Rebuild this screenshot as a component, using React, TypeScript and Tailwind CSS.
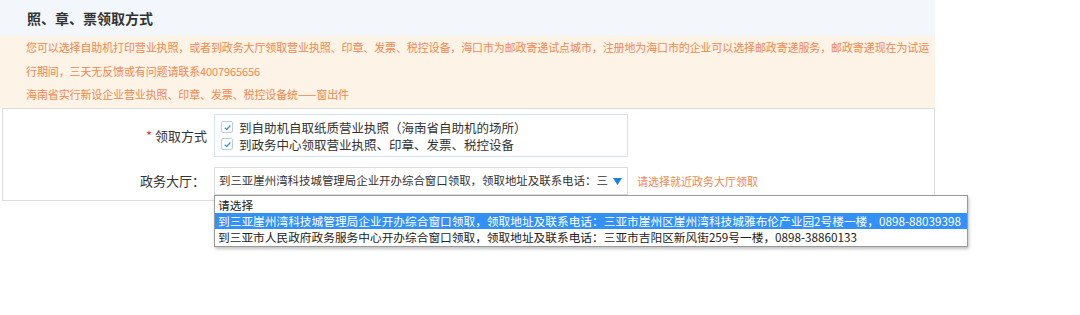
import React from "react";

const font = { fontFamily: '"Microsoft YaHei", "Noto Sans CJK SC", "Noto Sans", sans-serif' };

function Check() {
  return (
    <span className="flex h-[12px] w-[12px] shrink-0 items-center justify-center rounded-[2px] border border-[#b8cfe6] bg-white">
      <svg width="9" height="9" viewBox="0 0 10 10">
        <path d="M2 5.2 L4.2 7.2 L8.2 2.8" fill="none" stroke="#3a8ee6" strokeWidth="1.4" />
      </svg>
    </span>
  );
}

export default function App() {
  return (
    <div className="relative h-[315px] w-[1080px] bg-white text-[#333]" style={font}>
      <div className="w-[935px]">
        <div className="flex h-[36px] items-center bg-[#f3f7fc] pl-[27px] text-[14px] font-bold text-[#333]">
          照、章、票领取方式
        </div>
        <div className="h-[72px] bg-[#fdf3e7] pl-[26px] text-[11px] leading-[23.7px] tracking-[-0.12px] text-[#f0884f]">
          <p className="whitespace-nowrap">
            您可以选择自助机打印营业执照，或者到政务大厅领取营业执照、印章、发票、税控设备，海口市为邮政寄递试点城市，注册地为海口市的企业可以选择邮政寄递服务，邮政寄递现在为试运
          </p>
          <p className="whitespace-nowrap">行期间，三天无反馈或有问题请联系4007965656</p>
          <p className="whitespace-nowrap">海南省实行新设企业营业执照、印章、发票、税控设备统——窗出件</p>
        </div>
        <div className="ml-[2px] flex flex-col gap-[10px] border border-[#dddddd] py-[5px]">
          <div className="flex items-center">
            <div className="w-[211px] pr-[7px] text-right text-[13px]">
              <span className="text-[#e4393c]">*</span> 领取方式
            </div>
            <div className="flex h-[43px] w-[414px] flex-col justify-center gap-[2px] border border-[#d3e3f3] pl-[6px] text-[12.5px] leading-[15px]">
              <label className="flex items-center gap-[6px]">
                <Check />
                <span>到自助机自取纸质营业执照（海南省自助机的场所）</span>
              </label>
              <label className="flex items-center gap-[6px]">
                <Check />
                <span>到政务中心领取营业执照、印章、发票、税控设备</span>
              </label>
            </div>
          </div>
          <div className="flex items-center">
            <div className="w-[211px] pr-[9px] text-right text-[13px]">政务大厅：</div>
            <div className="flex h-[28px] w-[414px] items-center border border-[#dddddd] pl-[4px] pr-[5px] text-[11.45px]">
              <span className="min-w-0 flex-1 overflow-hidden whitespace-nowrap">
                到三亚崖州湾科技城管理局企业开办综合窗口领取，领取地址及联系电话：三
              </span>
              <svg width="9" height="7" viewBox="0 0 9 7" className="ml-[1px] shrink-0">
                <path d="M0 0 H9 L4.5 7 Z" fill="#1f7fe0" />
              </svg>
            </div>
            <span className="ml-[9px] text-[11px] text-[#f0884f]">请选择就近政务大厅领取</span>
          </div>
        </div>
      </div>
      <div className="absolute left-[214px] top-[195px] w-[754px] border border-[#9a9a9a] bg-white py-[1px] text-[11.7px] leading-[16px] text-[#222] shadow-[1px_2px_3px_rgba(0,0,0,0.25)]">
        <div className="whitespace-nowrap pl-[3px]">请选择</div>
        <div className="overflow-hidden whitespace-nowrap bg-[#3391f5] pl-[3px] text-white">
          到三亚崖州湾科技城管理局企业开办综合窗口领取，领取地址及联系电话：三亚市崖州区崖州湾科技城雅布伦产业园2号楼一楼，0898-88039398
        </div>
        <div className="whitespace-nowrap pl-[3px]">
          到三亚市人民政府政务服务中心开办综合窗口领取，领取地址及联系电话：三亚市吉阳区新风街259号一楼，0898-38860133
        </div>
      </div>
    </div>
  );
}
